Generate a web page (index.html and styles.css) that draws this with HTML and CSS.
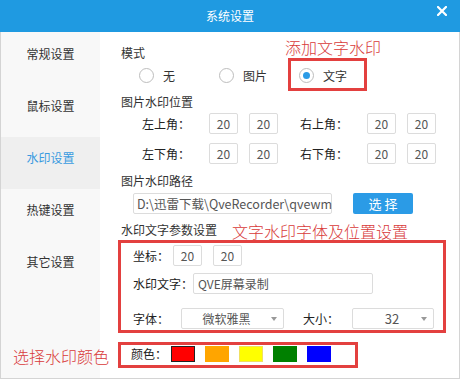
FILE: index.html
```html
<!DOCTYPE html>
<html lang="zh-CN">

<head>
    <meta charset="UTF-8">
    <meta name="viewport" content="width=device-width, initial-scale=1.0">
    <title>系统设置</title>
    <link rel="stylesheet" href="styles.css">
</head>

<body>
    <div class="window">
        <div class="titlebar">
            <span class="title">系统设置</span>
            <svg class="close" width="10" height="10" viewBox="0 0 10 10">
                <path d="M1 1 L9 9 M9 1 L1 9" stroke="#fff" stroke-width="2.2" stroke-linecap="square" />
            </svg>
        </div>

        <div class="body">
            <ul class="sidebar">
                <li>常规设置</li>
                <li>鼠标设置</li>
                <li class="active">水印设置</li>
                <li>热键设置</li>
                <li>其它设置</li>
            </ul>

            <div class="main">
                <div class="sec-title mode-title">模式</div>
                <div class="radio-row">
                    <div class="radio"><span class="dot"></span>无</div>
                    <div class="radio"><span class="dot"></span>图片</div>
                    <div class="radio checked"><span class="dot"></span>文字</div>
                </div>

                <div class="sec-title pos-title">图片水印位置</div>
                <div class="pos-row first">
                    <div class="pos-group">
                        <span class="label">左上角：</span>
                        <span class="box">20</span>
                        <span class="box">20</span>
                    </div>
                    <div class="pos-group">
                        <span class="label">右上角：</span>
                        <span class="box">20</span>
                        <span class="box">20</span>
                    </div>
                </div>
                <div class="pos-row second">
                    <div class="pos-group">
                        <span class="label">左下角：</span>
                        <span class="box">20</span>
                        <span class="box">20</span>
                    </div>
                    <div class="pos-group">
                        <span class="label">右下角：</span>
                        <span class="box">20</span>
                        <span class="box">20</span>
                    </div>
                </div>

                <div class="sec-title path-title">图片水印路径</div>
                <div class="path-row">
                    <span class="path-input">D:\迅雷下载\QveRecorder\qvewm</span>
                    <span class="btn">选 择</span>
                </div>

                <div class="sec-title text-title">水印文字参数设置</div>
                <div class="param-row coord-row">
                    <span class="label w40">坐标：</span>
                    <span class="box">20</span>
                    <span class="box">20</span>
                </div>
                <div class="param-row wm-row">
                    <span class="label w60">水印文字：</span>
                    <span class="text-input">QVE屏幕录制</span>
                </div>
                <div class="param-row font-row">
                    <span class="label w48">字体：</span>
                    <span class="select font-select">微软雅黑<i class="arrow"></i></span>
                    <span class="label w49 size-label">大小：</span>
                    <span class="select size-select">32<i class="arrow"></i></span>
                </div>
                <div class="param-row color-row">
                    <span class="label w40">颜色：</span>
                    <span class="swatch selected" style="background:#ff0000"></span>
                    <span class="swatch" style="background:#ffa500"></span>
                    <span class="swatch light" style="background:#ffff00"></span>
                    <span class="swatch" style="background:#008000"></span>
                    <span class="swatch" style="background:#0000ff"></span>
                </div>
            </div>
        </div>

        <!-- annotations drawn over the screenshot -->
        <div class="mark mark-mode"></div>
        <div class="mark mark-params"></div>
        <div class="mark mark-color"></div>
        <div class="note note-mode">添加文字水印</div>
        <div class="note note-params">文字水印字体及位置设置</div>
        <div class="note note-color">选择水印颜色</div>
    </div>
</body>

</html>
```

FILE: styles.css
```css
* {
    box-sizing: border-box;
}

body {
    margin: 0;
    font-family: "Noto Sans CJK SC", "Liberation Sans", sans-serif;
    font-size: 12px;
    color: #333;
    background: #fff;
}

.window {
    position: relative;
    width: 460px;
    height: 379px;
    display: flex;
    flex-direction: column;
    border: 1px solid #d4d4d4;
    border-top: none;
}

.titlebar {
    position: relative;
    height: 32px;
    margin: 0 -1px;
    background: #1f9ae1;
    color: #fff;
    display: flex;
    align-items: center;
    justify-content: center;
}

.title {
    font-size: 12px;
    line-height: 16px;
}

.close {
    position: absolute;
    left: 437px;
    top: 6px;
}

.body {
    flex: 1;
    display: flex;
}

/* sidebar */
.sidebar {
    list-style: none;
    margin: 0;
    padding: 1px 0 0;
    width: 99px;
    background: #f8f8f8;
}

.sidebar li {
    height: 52px;
    padding-top: 13px;
    line-height: 16px;
    text-align: center;
    color: #333;
}

.sidebar li.active {
    background: #efefef;
    color: #3a9be0;
}

/* main */
.main {
    flex: 1;
    padding: 13px 0 0 21px;
}

.sec-title {
    line-height: 16px;
    color: #333;
}

.label {
    color: #222;
    line-height: 16px;
    flex: none;
}

.box {
    width: 29px;
    height: 21px;
    border: 1px solid #dcdcdc;
    border-radius: 2px;
    color: #555;
    display: flex;
    align-items: center;
    justify-content: center;
    flex: none;
}

.radio-row {
    display: flex;
    height: 20px;
    margin: 4px 0 0 18px;
}

.radio {
    width: 80px;
    display: flex;
    align-items: center;
    color: #333;
}

.radio .dot {
    width: 15px;
    height: 15px;
    border: 1px solid #bdbdbd;
    border-radius: 50%;
    margin-right: 9px;
    display: flex;
    align-items: center;
    justify-content: center;
}

.radio.checked .dot::after {
    content: "";
    width: 7px;
    height: 7px;
    border-radius: 50%;
    background: #2b9be6;
}

.pos-title {
    margin-top: 9px;
}

.pos-row {
    display: flex;
    gap: 22px;
    margin-left: 21px;
}

.pos-row.first {
    margin-top: 3px;
}

.pos-row.second {
    margin-top: 9px;
}

.pos-group {
    display: flex;
    align-items: center;
    gap: 11px;
}

.pos-group .label {
    width: 56px;
}

.path-title {
    margin-top: 9px;
}

.path-row {
    display: flex;
    gap: 21px;
    margin: 4px 0 0 12px;
}

.path-input {
    width: 199px;
    height: 21px;
    border: 1px solid #dcdcdc;
    border-radius: 2px;
    padding: 0 0 0 3px;
    line-height: 19px;
    color: #555;
    font-size: 12.5px;
    white-space: nowrap;
}

.btn {
    width: 60px;
    height: 21px;
    background: #2b9be6;
    border-radius: 2px;
    color: #fff;
    font-size: 13px;
    display: flex;
    align-items: center;
    justify-content: center;
}

.text-title {
    margin-top: 8px;
}

.param-row {
    display: flex;
    align-items: center;
    margin-left: 12px;
}

.coord-row {
    margin-top: 7px;
}

.coord-row .box + .box {
    margin-left: 11px;
}

.wm-row {
    margin-top: 7px;
}

.font-row {
    margin-top: 14px;
}

.w40 { width: 40px; }
.w48 { width: 48px; }
.w49 { width: 49px; }
.w60 { width: 60px; }

.size-label {
    margin-left: 19px;
}

.text-input {
    width: 180px;
    height: 21px;
    border: 1px solid #dcdcdc;
    border-radius: 2px;
    padding-left: 4px;
    line-height: 19px;
    color: #555;
}

.select {
    position: relative;
    height: 21px;
    border: 1px solid #dcdcdc;
    border-radius: 2px;
    color: #555;
    display: flex;
    align-items: center;
    justify-content: center;
}

.font-select {
    width: 103px;
    padding-right: 12px;
}

.size-select {
    width: 82px;
    padding-right: 2px;
    font-size: 13px;
}

.arrow {
    position: absolute;
    right: 6px;
    top: 8px;
    width: 0;
    height: 0;
    border-left: 3px solid transparent;
    border-right: 3px solid transparent;
    border-top: 4px solid #999;
}

.color-row {
    margin: 16px 0 0 10px;
    height: 17px;
}

.color-row .label {
    width: 40px;
}

.swatch {
    width: 24px;
    height: 16px;
    margin-right: 10px;
    flex: none;
}

.swatch.selected {
    border: 1px solid #222;
}

.swatch.light {
    border: 1px solid #f0e060;
}

/* annotations */
.mark {
    position: absolute;
    border: 3px solid #e3403f;
}

.mark-mode {
    left: 287px;
    top: 58px;
    width: 79px;
    height: 33px;
}

.mark-params {
    left: 117px;
    top: 240px;
    width: 328px;
    height: 93px;
}

.mark-color {
    left: 117px;
    top: 342px;
    width: 240px;
    height: 26px;
}

.note {
    position: absolute;
    color: #d83a3a;
    font-size: 16px;
    font-weight: 300;
    line-height: 20px;
    white-space: nowrap;
}

.note-mode {
    left: 284px;
    top: 37px;
}

.note-params {
    left: 231px;
    top: 221px;
}

.note-color {
    left: 12px;
    top: 346px;
}
```
